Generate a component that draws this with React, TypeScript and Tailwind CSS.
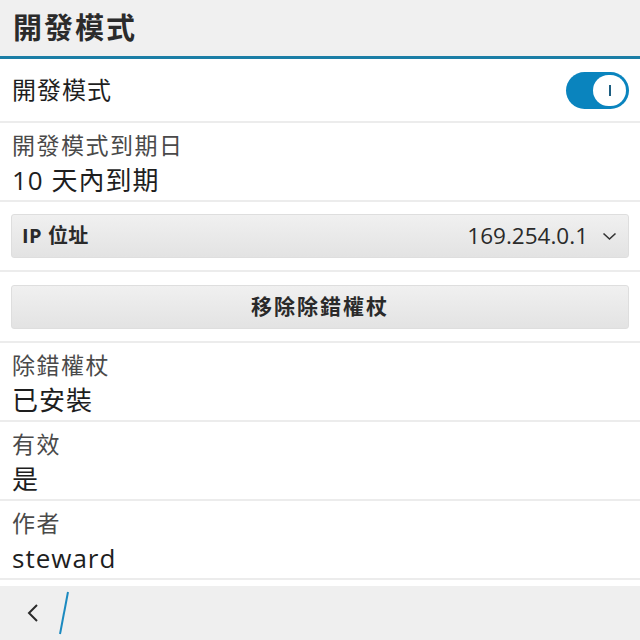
import React from "react";

const font = { fontFamily: '"Open Sans","Noto Sans CJK TC",sans-serif' };

function Divider() {
  return <div className="h-[2px] bg-[#ececec]" />;
}

function InfoRow({ label, value }: { label: string; value: string }) {
  return (
    <div className="h-[77px] px-[12px] pt-[6px] flex flex-col">
      <div className="text-[23px] leading-[32px] tracking-[1.5px] text-[#4a4a4a]">{label}</div>
      <div className="text-[26px] leading-[38px] tracking-[1px] text-[#1e1e1e]">{value}</div>
    </div>
  );
}

export default function App() {
  return (
    <div className="w-[640px] h-[640px] bg-white flex flex-col overflow-hidden" style={font}>
      <div className="h-[56px] bg-[#f0f0f0] flex items-center px-[13px]">
        <div className="text-[29px] font-bold text-[#2b2b2b] tracking-[2px]">開發模式</div>
      </div>
      <div className="h-[3px] bg-[#1b7ea6]" />
      <div className="h-[62px] flex items-center justify-between px-[12px]">
        <div className="text-[24px] tracking-[1px] text-[#1e1e1e]">開發模式</div>
        <div className="w-[63px] h-[37px] rounded-full bg-[#0a84be] flex items-center justify-end p-[3px] mr-[-1px]">
          <div className="w-[33px] h-[31px] rounded-full bg-white flex items-center justify-center">
            <div className="w-[2px] h-[11px] bg-[#1d5f82]" />
          </div>
        </div>
      </div>
      <Divider />
      <InfoRow label="開發模式到期日" value="10 天內到期" />
      <Divider />
      <div className="h-[68px] px-[11px] flex items-center">
        <div className="w-full h-[44px] rounded-[3px] bg-gradient-to-b from-[#f0f0f0] to-[#e3e3e3] border border-[#dedede] flex items-center justify-between pl-[10px] pr-[11px]">
          <div className="text-[20px] font-bold text-[#2a2a2a] tracking-[0.5px]">IP 位址</div>
          <div className="flex items-center gap-[14px]">
            <div className="text-[22.5px] text-[#2a2a2a]">169.254.0.1</div>
            <svg width="15" height="9" viewBox="0 0 15 9" fill="none">
              <path d="M1.5 1.5 L7.5 7 L13.5 1.5" stroke="#333" strokeWidth="1.6" />
            </svg>
          </div>
        </div>
      </div>
      <Divider />
      <div className="h-[69px] px-[11px] flex items-center">
        <div className="w-full h-[44px] rounded-[3px] bg-gradient-to-b from-[#f0f0f0] to-[#e3e3e3] border border-[#dedede] flex items-center justify-center">
          <div className="text-[21px] font-bold text-[#2a2a2a] tracking-[2px]">移除除錯權杖</div>
        </div>
      </div>
      <Divider />
      <InfoRow label="除錯權杖" value="已安裝" />
      <Divider />
      <InfoRow label="有效" value="是" />
      <Divider />
      <InfoRow label="作者" value="steward" />
      <Divider />
      <div className="flex-1 bg-white" />
      <div className="h-[54px] bg-[#efefef] flex items-center relative">
        <svg className="ml-[26px]" width="14" height="20" viewBox="0 0 14 20" fill="none">
          <path d="M11 2 L3 10 L11 18" stroke="#2a2a2a" strokeWidth="2" />
        </svg>
        <svg className="ml-[18px]" width="12" height="44" viewBox="0 0 12 44" fill="none">
          <path d="M10 1 L2 43" stroke="#1b8ac0" strokeWidth="2" />
        </svg>
      </div>
    </div>
  );
}
